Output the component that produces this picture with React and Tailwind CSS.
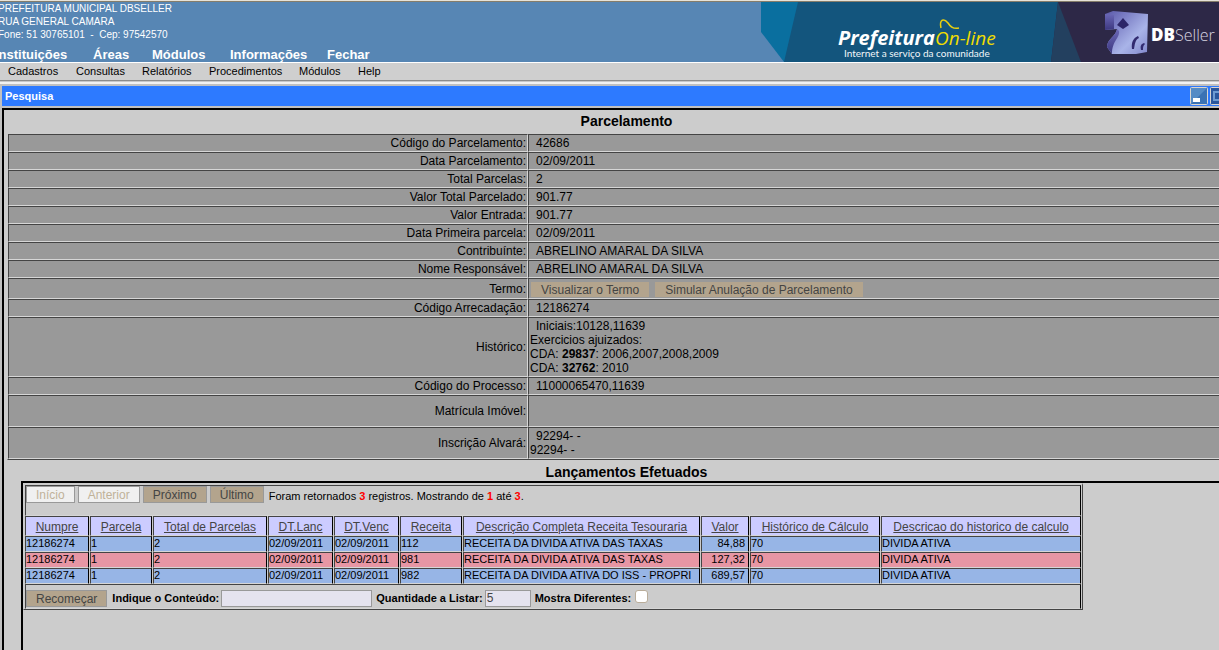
const menus = [
  ["Instituições", "w-[98px]"],
  ["Áreas", "w-[59px]"],
  ["Módulos", "w-[78px]"],
  ["Informações", "w-[97px]"],
  ["Fechar", "w-[60px]"],
];

const submenus = [
  ["Cadastros", "w-[68px]"],
  ["Consultas", "w-[66px]"],
  ["Relatórios", "w-[67px]"],
  ["Procedimentos", "w-[90px]"],
  ["Módulos", "w-[59px]"],
  ["Help", "w-[40px]"],
];

const tan = "h-[15px] bg-[#b3a48d] px-[10px] pt-px leading-[14px] text-[#444]";

const details = [
  ["Código do Parcelamento:", "42686", "h-[18px]"],
  ["Data Parcelamento:", "02/09/2011", "h-[18px]"],
  ["Total Parcelas:", "2", "h-[18px]"],
  ["Valor Total Parcelado:", "901.77", "h-[18px]"],
  ["Valor Entrada:", "901.77", "h-[18px]"],
  ["Data Primeira parcela:", "02/09/2011", "h-[18px]"],
  ["Contribuínte:", "ABRELINO AMARAL DA SILVA", "h-[18px]"],
  ["Nome Responsável:", "ABRELINO AMARAL DA SILVA", "h-[18px]"],
  [
    "Termo:",
    <div className="flex items-end gap-[6px] pl-px pt-px">
      <button type="button" className={tan}>Visualizar o Termo</button>
      <button type="button" className={tan}>Simular Anulação de Parcelamento</button>
    </div>,
    "h-[21px]",
  ],
  ["Código Arrecadação:", "12186274", "h-[18px]"],
  [
    "Histórico:",
    <>
      <p className="pl-[6px]">Iniciais:10128,11639</p>
      <p>Exercicios ajuizados:</p>
      <p>CDA: <b>29837</b>: 2006,2007,2008,2009</p>
      <p>CDA: <b>32762</b>: 2010</p>
    </>,
    "h-[60px]",
  ],
  ["Código do Processo:", "11000065470,11639", "h-[18px]"],
  ["Matrícula Imóvel:", "", "h-[32px]"],
  [
    "Inscrição Alvará:",
    <>
      <p className="pl-[6px]">92294- -</p>
      <p>92294- -</p>
    </>,
    "h-[32px]",
  ],
];

const columns = [
  ["Numpre", "w-[64px]"],
  ["Parcela", "w-[62px]"],
  ["Total de Parcelas", "w-[114px]"],
  ["DT.Lanc", "w-[65px]"],
  ["DT.Venc", "w-[65px]"],
  ["Receita", "w-[62px]"],
  ["Descrição Completa Receita Tesouraria", "w-[237px]"],
  ["Valor", "w-[48px]"],
  ["Histórico de Cálculo", "w-[130px]"],
  ["Descricao do historico de calculo", "w-[200px]"],
];

const rows = [
  ["12186274", "1", "2", "02/09/2011", "02/09/2011", "112", "RECEITA DA DIVIDA ATIVA DAS TAXAS", "84,88", "70", "DIVIDA ATIVA"],
  ["12186274", "1", "2", "02/09/2011", "02/09/2011", "981", "RECEITA DA DIVIDA ATIVA DAS TAXAS", "127,32", "70", "DIVIDA ATIVA"],
  ["12186274", "1", "2", "02/09/2011", "02/09/2011", "982", "RECEITA DA DIVIDA ATIVA DO ISS - PROPRI", "689,57", "70", "DIVIDA ATIVA"],
];

const cell = "border border-t-[#444] border-l-[#444] border-r-black border-b-[#d6d6d6] p-0";
const pager = "h-[17px] border border-[#999] px-[9px] pt-px text-[12px] leading-[14px]";
const field = "ml-[2px] mr-[4px] h-[17px] border border-[#999] bg-[#e5e3ef] px-px text-[12px] font-normal text-[#444]";

function Banner() {
  return (
    <svg width="458" height="60" viewBox="761 2 458 60" className="shrink-0" role="img" aria-label="Prefeitura On-line, DBSeller">
      <defs>
        <linearGradient id="front" x1="0" y1="0" x2="1" y2="1">
          <stop offset="0" stopColor="#5a58a8" />
          <stop offset="0.3" stopColor="#7d80c6" />
          <stop offset="0.65" stopColor="#a9b4e8" />
          <stop offset="1" stopColor="#8288cc" />
        </linearGradient>
        <linearGradient id="side" x1="0" y1="0" x2="0" y2="1">
          <stop offset="0" stopColor="#6a67b6" />
          <stop offset="1" stopColor="#3d3880" />
        </linearGradient>
      </defs>
      <path d="M761 2H798V62H784L761 32Z" fill="#0a6f9f" />
      <path d="M798 2H1060V62H784Z" fill="#13557d" />
      <path d="M1058 2H1219V62H1051Z" fill="#2d2847" />
      <path d="M1058 2L1081 62H1051Z" fill="#23405f" />
      <text x="838" y="45" fill="#fff" fontFamily="Open Sans" fontWeight="700" fontStyle="italic" fontSize="20">Prefeitura</text>
      <text x="935" y="45" fill="#f0dc00" fontFamily="Open Sans" fontStyle="italic" fontSize="19">On-line</text>
      <path d="M941 28C939 19 944 18 948 23C951 28 954 29 959 28" fill="none" stroke="#e8cf10" strokeWidth="1.5" />
      <text x="844" y="57" fill="#f2f7fa" fontFamily="Lato" fontSize="10">Internet a serviço da comunidade</text>
      <path d="M1105 14L1113 11L1148 14L1147 52L1136 54L1112 54L1107 47C1107 39 1116 36 1117 29L1105 30Z" fill="url(#front)" />
      <path d="M1105 14L1114 15V29L1105 30Z" fill="url(#side)" />
      <path d="M1117 29L1119 31C1120 38 1112 41 1112 54L1107 47C1107 39 1116 36 1117 29Z" fill="url(#side)" />
      <path d="M1117 25L1123 18L1129 25L1123 29Z" fill="#2c2568" />
      <path d="M1132 49C1131 43 1133 38 1138 36L1139 38C1135 40 1135 44 1134 49ZM1141 50C1140 46 1141 44 1144 43L1145 44C1143 46 1143 47 1143 50Z" fill="#322b70" />
      <text x="1151" y="41" fill="#fff" fontFamily="Open Sans" fontWeight="800" fontSize="17">DB</text>
      <text x="1175" y="41" fill="#d8d6e2" fontFamily="Open Sans" fontWeight="300" fontSize="16">Seller</text>
    </svg>
  );
}

function WindowButton({ label, children }) {
  return (
    <button type="button" aria-label={label} className="h-[18px] w-[18px] shrink-0">
      <svg viewBox="0 0 18 18" className="block h-full w-full">
        {children}
      </svg>
    </button>
  );
}

export default function App() {
  return (
    <div className="flex h-screen flex-col overflow-hidden bg-[#c0c0c0] font-['Liberation_Sans',Arial,sans-serif] text-[12px] leading-[14px] text-black">
      <div className="h-px shrink-0 bg-[#e6e2d8]" />
      <header className="flex h-[61px] shrink-0 justify-between border-t border-[#857d6b] bg-[#5786b4] text-white">
        <div className="flex flex-col justify-between whitespace-nowrap">
          <address className="-ml-[2px] text-[10px] leading-[13px] not-italic">
            <p>PREFEITURA MUNICIPAL DBSELLER</p>
            <p>RUA GENERAL CAMARA</p>
            <p>Fone: 51 30765101 &nbsp;-&nbsp; Cep: 97542570</p>
          </address>
          <nav className="-ml-[5px] flex text-[13px] font-bold leading-[15px]">
            {menus.map(([name, width]) => (
              <a key={name} href="#" className={width}>{name}</a>
            ))}
          </nav>
        </div>
        <Banner />
      </header>
      <nav className="flex h-[19px] shrink-0 border-t border-b border-t-white border-b-[#8c8c8c] bg-[#cfcfcf] pl-2 text-[11px] leading-[17px]">
        {submenus.map(([name, width]) => (
          <a key={name} href="#" className={width}>{name}</a>
        ))}
      </nav>
      <div className="h-[3px] shrink-0 border-t border-[#c8c8c8] bg-[#f2f2f2]" />

      <section className="-mr-8 flex min-h-0 flex-1 flex-col pl-[2px] pt-[2px]">
        <div className="flex h-5 shrink-0 items-center justify-between bg-[#2d7aff] px-[3px]">
          <h1 className="text-[11px] font-bold text-white">Pesquisa</h1>
          <div className="flex gap-[2px]">
            <WindowButton label="Minimizar">
              <rect x="0.5" y="0.5" width="17" height="17" rx="1" fill="#3a72b4" stroke="#d9d5d0" />
              <path d="M1 1H17L1 17Z" fill="#6fa3d5" opacity=".5" />
              <rect x="3" y="11" width="7" height="4" fill="#fff" />
            </WindowButton>
            <WindowButton label="Maximizar">
              <rect x="0.5" y="0.5" width="17" height="17" rx="1" fill="#2a569c" stroke="#d9d5d0" />
              <path d="M4 5H14V13H4Z" fill="none" stroke="#6d9bd2" strokeWidth="2" />
            </WindowButton>
            <WindowButton label="Fechar">
              <rect x="0.5" y="0.5" width="17" height="17" rx="1" fill="#3a72b4" stroke="#d9d5d0" />
              <path d="M5 5L13 13M13 5L5 13" stroke="#fff" strokeWidth="2" />
            </WindowButton>
          </div>
        </div>

        <main className="mt-[2px] flex min-h-0 flex-1 flex-col border-2 border-b-0 border-black bg-[#ccc] px-[3px]">
          <h2 className="pt-[3px] text-center text-[14px] font-bold leading-[16px]">Parcelamento</h2>
          <table className="mt-[4px] w-full table-fixed border-separate border-spacing-0 border border-[#ccc] border-b-[#444]">
            <tbody>
              {details.map(([label, value, height]) => (
                <tr key={label} className={height}>
                  <th scope="row" className="w-[520px] border border-t-[#444] border-l-[#444] border-r-[#d6d6d6] border-b-[#d6d6d6] bg-[#999] p-0 pr-px text-right font-normal">
                    {label}
                  </th>
                  <td className="border border-t-[#444] border-l-[#444] border-r-[#d6d6d6] border-b-[#d6d6d6] bg-[#999] p-0 pl-px">
                    {typeof value === "string" ? <p className="pl-[6px]">{value}</p> : value}
                  </td>
                </tr>
              ))}
            </tbody>
          </table>

          <h2 className="pt-[4px] text-center text-[14px] font-bold leading-[16px]">Lançamentos Efetuados</h2>
          <div className="ml-[14px] mt-px min-h-0 flex-1 border-l-2 border-t-2 border-black">
            <table className="w-[1060px] table-fixed border-separate border-spacing-x-px border-spacing-y-0 border border-t-2 border-[#ccc] border-r-[#444] border-b-[#444] text-[11px]">
              <colgroup>
                {columns.map(([name, width]) => (
                  <col key={name} className={width} />
                ))}
              </colgroup>
              <thead>
                <tr className="h-[31px]">
                  <td colSpan={10} className={`${cell} align-top`}>
                    <div className="flex items-center gap-[3px] whitespace-nowrap">
                      <button type="button" disabled className={`${pager} bg-[#f0f0f0] text-[#c0b299]`}>Início</button>
                      <button type="button" disabled className={`${pager} bg-[#f0f0f0] text-[#c0b299]`}>Anterior</button>
                      <button type="button" className={`${pager} bg-[#b3a48d] text-[#444]`}>Próximo</button>
                      <button type="button" className={`${pager} bg-[#b3a48d] text-[#444]`}>Último</button>
                      <p className="pl-[2px] pt-[3px]">
                        Foram retornados <b className="text-[#f00]">3</b> registros. Mostrando de <b className="text-[#f00]">1</b> até <b className="text-[#f00]">3</b>.
                      </p>
                    </div>
                  </td>
                </tr>
                <tr className="h-[20px]">
                  {columns.map(([name]) => (
                    <th key={name} scope="col" className={`${cell} bg-[#ccf] text-center align-bottom text-[12px] font-normal`}>
                      <button type="button" className="block w-full whitespace-nowrap leading-[16px] text-[#444] underline">{name}</button>
                    </th>
                  ))}
                </tr>
              </thead>
              <tbody>
                {rows.map((row, r) => (
                  <tr key={r} className="h-[16px]">
                    {row.map((value, c) => (
                      <td
                        key={c}
                        className={`${cell} whitespace-nowrap align-top leading-[12px] ${r === 1 ? "bg-[#e796a4]" : "bg-[#97b5e6]"} ${c === 7 ? "pr-[3px] text-right" : ""}`}
                      >
                        {value}
                      </td>
                    ))}
                  </tr>
                ))}
              </tbody>
              <tfoot>
                <tr className="h-[25px]">
                  <td colSpan={10} className={cell}>
                    <div className="flex items-center pt-[3px] font-bold whitespace-nowrap">
                      <button type="button" className={`${pager} mr-[5px] bg-[#b3a48d] font-normal text-[#444]`}>Recomeçar</button>
                      <label htmlFor="conteudo">Indique o Conteúdo:</label>
                      <input id="conteudo" type="text" className={`${field} w-[151px]`} />
                      <label htmlFor="quantidade">Quantidade a Listar:</label>
                      <input id="quantidade" type="text" defaultValue="5" className={`${field} w-[46px]`} />
                      <label htmlFor="diferentes">Mostra Diferentes:</label>
                      <input id="diferentes" type="checkbox" className="mb-1 ml-[4px] h-[13px] w-[13px] appearance-none rounded-[3px] border border-[#b9ad9a] bg-white" />
                    </div>
                  </td>
                </tr>
              </tfoot>
            </table>
          </div>
        </main>
      </section>
    </div>
  );
}
